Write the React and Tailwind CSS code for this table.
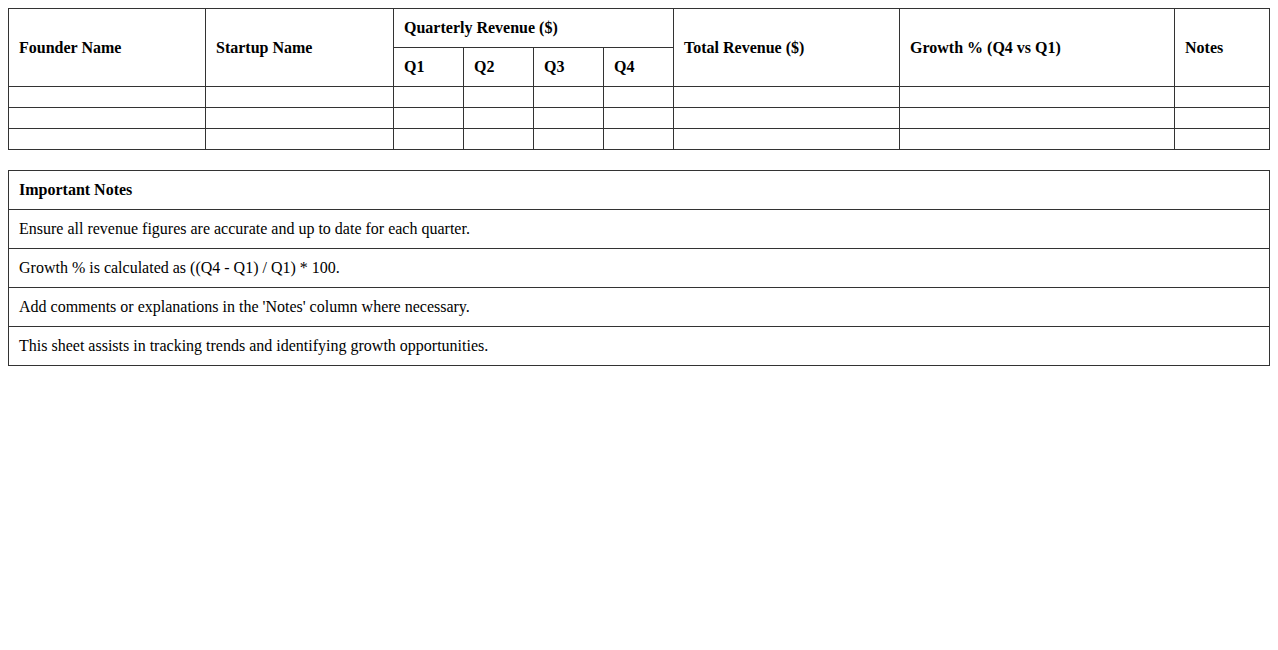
const quarters = ['Q1', 'Q2', 'Q3', 'Q4'];

const notes = [
  'Ensure all revenue figures are accurate and up to date for each quarter.',
  'Growth % is calculated as ((Q4 - Q1) / Q1) * 100.',
  "Add comments or explanations in the 'Notes' column where necessary.",
  'This sheet assists in tracking trends and identifying growth opportunities.',
];

const cell = 'border border-[#333] p-[10px] text-left';

export default function App() {
  return (
    <div className="min-h-screen bg-white p-2 text-[16px] leading-[18px] text-black font-['Liberation_Serif','Times_New_Roman',serif]">
      <table className="mb-5 w-[1262px] table-fixed border-collapse">
        <colgroup>
          <col className="w-[197px]" />
          <col className="w-[188px]" />
          <col className="w-[70px]" />
          <col className="w-[70px]" />
          <col className="w-[70px]" />
          <col className="w-[70px]" />
          <col className="w-[226px]" />
          <col className="w-[275px]" />
          <col className="w-[95px]" />
        </colgroup>
        <thead>
          <tr>
            <th rowSpan={2} className={cell}>Founder Name</th>
            <th rowSpan={2} className={cell}>Startup Name</th>
            <th colSpan={4} className={cell}>Quarterly Revenue ($)</th>
            <th rowSpan={2} className={cell}>Total Revenue ($)</th>
            <th rowSpan={2} className={cell}>Growth % (Q4 vs Q1)</th>
            <th rowSpan={2} className={cell}>Notes</th>
          </tr>
          <tr>
            {quarters.map((q) => (
              <th key={q} className={cell}>{q}</th>
            ))}
          </tr>
        </thead>
        <tbody>
          {[0, 1, 2].map((r) => (
            <tr key={r}>
              {Array.from({ length: 9 }).map((_, c) => (
                <td key={c} className="h-[21px] border border-[#333] p-[10px]"></td>
              ))}
            </tr>
          ))}
        </tbody>
      </table>

      <table className="w-[1262px] border-collapse">
        <thead>
          <tr>
            <th className={cell}>Important Notes</th>
          </tr>
        </thead>
        <tbody>
          {notes.map((n) => (
            <tr key={n}>
              <td className={cell}>{n}</td>
            </tr>
          ))}
        </tbody>
      </table>
    </div>
  );
}
